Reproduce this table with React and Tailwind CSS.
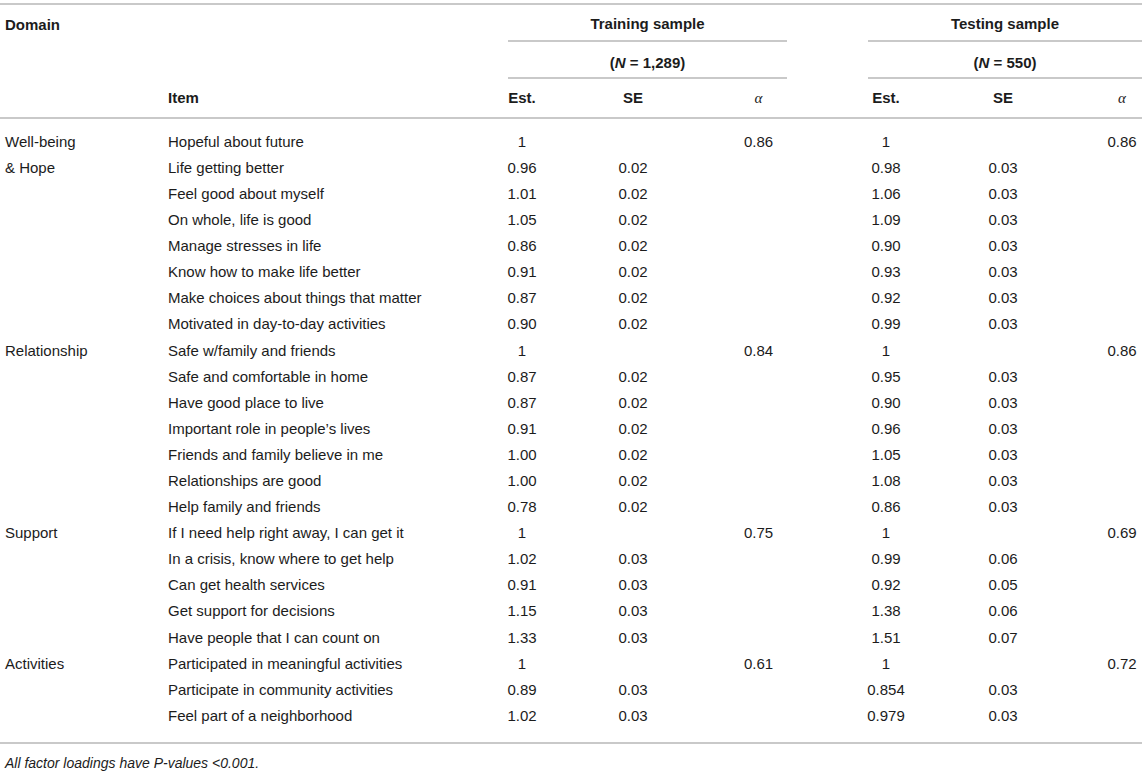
const ROWS = [
  ["Well-being", "Hopeful about future", "1", "", "0.86", "1", "", "0.86"],
  ["& Hope", "Life getting better", "0.96", "0.02", "", "0.98", "0.03", ""],
  ["", "Feel good about myself", "1.01", "0.02", "", "1.06", "0.03", ""],
  ["", "On whole, life is good", "1.05", "0.02", "", "1.09", "0.03", ""],
  ["", "Manage stresses in life", "0.86", "0.02", "", "0.90", "0.03", ""],
  ["", "Know how to make life better", "0.91", "0.02", "", "0.93", "0.03", ""],
  ["", "Make choices about things that matter", "0.87", "0.02", "", "0.92", "0.03", ""],
  ["", "Motivated in day-to-day activities", "0.90", "0.02", "", "0.99", "0.03", ""],
  ["Relationship", "Safe w/family and friends", "1", "", "0.84", "1", "", "0.86"],
  ["", "Safe and comfortable in home", "0.87", "0.02", "", "0.95", "0.03", ""],
  ["", "Have good place to live", "0.87", "0.02", "", "0.90", "0.03", ""],
  ["", "Important role in people\u2019s lives", "0.91", "0.02", "", "0.96", "0.03", ""],
  ["", "Friends and family believe in me", "1.00", "0.02", "", "1.05", "0.03", ""],
  ["", "Relationships are good", "1.00", "0.02", "", "1.08", "0.03", ""],
  ["", "Help family and friends", "0.78", "0.02", "", "0.86", "0.03", ""],
  ["Support", "If I need help right away, I can get it", "1", "", "0.75", "1", "", "0.69"],
  ["", "In a crisis, know where to get help", "1.02", "0.03", "", "0.99", "0.06", ""],
  ["", "Can get health services", "0.91", "0.03", "", "0.92", "0.05", ""],
  ["", "Get support for decisions", "1.15", "0.03", "", "1.38", "0.06", ""],
  ["", "Have people that I can count on", "1.33", "0.03", "", "1.51", "0.07", ""],
  ["Activities", "Participated in meaningful activities", "1", "", "0.61", "1", "", "0.72"],
  ["", "Participate in community activities", "0.89", "0.03", "", "0.854", "0.03", ""],
  ["", "Feel part of a neighborhood", "1.02", "0.03", "", "0.979", "0.03", ""],
];

const GRID = "grid grid-cols-[163px_345px_28px_194px_57px_81px_36px_198px_40px]";
const NUM = "flex justify-center items-center whitespace-nowrap";

function Alpha() {
  return <span className="italic font-['Liberation_Serif',serif] font-normal">α</span>;
}

export default function App() {
  return (
    <div className="bg-white min-h-[772px] pt-[3px] text-[15px] text-[#1c1c1c] font-['Liberation_Sans',Arial,sans-serif]">
      <div className="w-[1142px] border-t-2 border-[#c9c9c9]">
        {/* header */}
        <div className={`${GRID} font-bold`}>
          <div className="h-[37px] flex items-center pt-[3px] pl-[5px]">Domain</div>
          <div />
          <div className="col-span-3 h-[37px] border-b-2 border-[#c9c9c9] flex justify-center items-center pt-[3px]">
            Training sample
          </div>
          <div />
          <div className="col-span-3 h-[37px] border-b-2 border-[#c9c9c9] flex justify-center items-center pt-[3px]">
            Testing sample
          </div>

          <div />
          <div />
          <div className="col-span-3 h-[37px] border-b-2 border-[#c9c9c9] flex justify-center items-center pt-[7px]">
            (<span className="italic">N</span>&nbsp;=&nbsp;1,289)
          </div>
          <div />
          <div className="col-span-3 h-[37px] border-b-2 border-[#c9c9c9] flex justify-center items-center pt-[7px]">
            (<span className="italic">N</span>&nbsp;=&nbsp;550)
          </div>
        </div>

        <div className={`${GRID} font-bold border-b-2 border-[#c9c9c9]`}>
          <div />
          <div className="h-[38px] flex items-center pl-[5px]">Item</div>
          <div className={NUM}>Est.</div>
          <div className={NUM}>SE</div>
          <div className={NUM}><Alpha /></div>
          <div />
          <div className={NUM}>Est.</div>
          <div className={NUM}>SE</div>
          <div className={NUM}><Alpha /></div>
        </div>

        {/* body */}
        <div className={`${GRID} auto-rows-[26.1px] pt-[10px] pb-[13px] border-b-2 border-[#c9c9c9]`}>
          {ROWS.map((row, i) => (
            <div key={i} className="contents">
              <div className="flex items-center pl-[5px] whitespace-nowrap">{row[0]}</div>
              <div className="flex items-center pl-[5px] whitespace-nowrap">{row[1]}</div>
              <div className={NUM}>{row[2]}</div>
              <div className={NUM}>{row[3]}</div>
              <div className={NUM}>{row[4]}</div>
              <div />
              <div className={NUM}>{row[5]}</div>
              <div className={NUM}>{row[6]}</div>
              <div className={NUM}>{row[7]}</div>
            </div>
          ))}
        </div>
      </div>

      <p className="mt-[10px] pl-[5px] italic text-[14px] leading-[18px]">
        All factor loadings have P-values &lt;0.001.
      </p>
    </div>
  );
}
